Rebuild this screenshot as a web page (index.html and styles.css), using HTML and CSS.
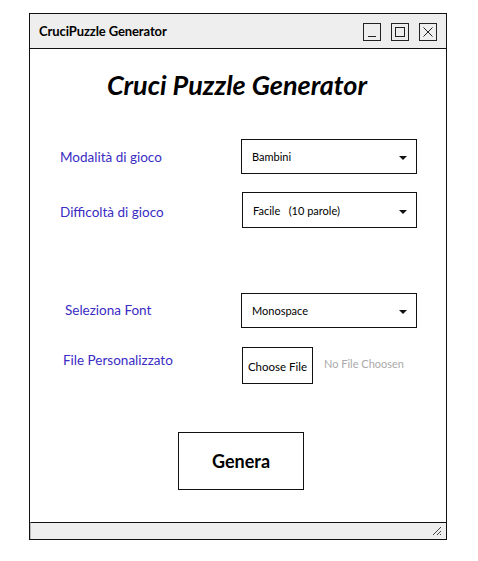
FILE: index.html
```html
<!DOCTYPE html>
<html lang="it">
<head>
<meta charset="utf-8">
<title>CruciPuzzle Generator</title>
<link rel="stylesheet" href="styles.css">
</head>
<body>
<div class="window">
  <div class="titlebar">
    <span class="title">CruciPuzzle Generator</span>
    <div class="controls">
      <span class="ctl"><svg width="16" height="16" viewBox="0 0 16 16"><line x1="4" y1="12.5" x2="12" y2="12.5" stroke="#222" stroke-width="1"/></svg></span>
      <span class="ctl"><svg width="16" height="16" viewBox="0 0 16 16"><rect x="3.5" y="3.5" width="9" height="9" fill="none" stroke="#222" stroke-width="1"/></svg></span>
      <span class="ctl"><svg width="16" height="16" viewBox="0 0 16 16"><path d="M3.5 3.5 L12.5 12.5 M12.5 3.5 L3.5 12.5" stroke="#222" stroke-width="1"/></svg></span>
    </div>
  </div>
  <div class="content">
    <h1 class="heading">Cruci Puzzle Generator</h1>
    <div class="row row-mode">
      <span class="label">Modalità di gioco</span>
      <div class="select"><span>Bambini</span><i class="arrow"></i></div>
    </div>
    <div class="row row-diff">
      <span class="label">Difficoltà di gioco</span>
      <div class="select"><span>Facile&nbsp;&nbsp;&nbsp;(10 parole)</span><i class="arrow"></i></div>
    </div>
    <div class="row row-font">
      <span class="label">Seleziona Font</span>
      <div class="select"><span>Monospace</span><i class="arrow"></i></div>
    </div>
    <div class="row row-file">
      <span class="label">File Personalizzato</span>
      <div class="file">
        <span class="file-btn">Choose File</span>
        <span class="file-none">No File Choosen</span>
      </div>
    </div>
    <div class="actions">
      <span class="genera">Genera</span>
    </div>
  </div>
  <div class="statusbar">
    <svg class="grip" width="10" height="10" viewBox="0 0 10 10"><path d="M1 9 L9 1 M5 9 L9 5" stroke="#444" stroke-width="1"/><path d="M8 8.5 L9 8.5" stroke="#444" stroke-width="1"/></svg>
  </div>
</div>
</body>
</html>
```
FILE: styles.css
```css
* { box-sizing: border-box; }
html, body { margin: 0; background: #fff; }
body {
  padding: 13px 0 0 29px;
  font-family: "Lato", "Noto Sans", sans-serif;
  color: #000;
}
.window {
  width: 418px;
  height: 527px;
  border: 1px solid #111;
  display: flex;
  flex-direction: column;
}
.titlebar {
  height: 35px;
  background: #eeeeee;
  border-bottom: 1px solid #111;
  display: flex;
  align-items: center;
  justify-content: space-between;
  padding: 0 9px 0 9px;
}
.title {
  font-weight: 700;
  font-size: 13px;
  letter-spacing: -0.1px;
}
.controls { display: flex; gap: 10px; padding-top: 1px; }
.ctl {
  width: 18px;
  height: 18px;
  border: 1px solid #222;
  display: flex;
  align-items: center;
  justify-content: center;
}
.content {
  flex: 1;
  display: flex;
  flex-direction: column;
}
.heading {
  margin: 20px 0 0 0;
  text-align: center;
  font-size: 27px;
  font-style: italic;
  font-weight: 700;
  line-height: 32px;
  padding-right: 2px;
}
.row {
  display: flex;
  align-items: center;
}
.label {
  color: #3a2cc4;
  font-size: 13.5px;
  width: 181px;
}
.select {
  width: 176px;
  height: 35px;
  border: 1px solid #111;
  display: flex;
  align-items: center;
  justify-content: space-between;
  padding: 0 9px 0 10px;
  font-size: 11px;
}
.arrow {
  width: 0;
  height: 0;
  border-left: 4.5px solid transparent;
  border-right: 4.5px solid transparent;
  border-top: 4.5px solid #111;
  margin-top: 3px;
}
.row-mode { margin-top: 38px; padding-left: 30px; }
.row-mode .label { padding-top: 1px; }
.row-diff { margin-top: 18px; padding-left: 30px; }
.row-diff .select { width: 175px; height: 36px; margin-left: 1px; }
.row-diff .label { padding-top: 3px; }
.row-font { margin-top: 65px; padding-left: 35px; }
.row-font .label { width: 176px; padding-bottom: 2px; }
.row-file { margin-top: 19px; padding-left: 33px; align-items: flex-start; }
.row-file .label { width: 179px; padding-top: 5px; }
.file { display: flex; align-items: center; }
.file-btn {
  width: 71px;
  height: 37px;
  border: 1px solid #111;
  display: flex;
  align-items: center;
  justify-content: center;
  font-size: 11.5px;
  padding-top: 2px;
}
.file-none {
  color: #aaaaaa;
  font-size: 11px;
  margin-left: 11px;
  margin-top: -4px;
}
.actions {
  margin-top: 48px;
  padding-left: 148px;
  display: flex;
}
.genera {
  width: 126px;
  height: 58px;
  border: 1px solid #111;
  display: flex;
  align-items: center;
  justify-content: center;
  font-weight: 700;
  font-size: 18px;
}
.statusbar {
  height: 17px;
  background: #eeeeee;
  border-top: 1px solid #111;
  border-left: 1px solid #bbb;
  display: flex;
  align-items: center;
  justify-content: flex-end;
  padding-right: 4px;
}
.grip { display: block; }
```
